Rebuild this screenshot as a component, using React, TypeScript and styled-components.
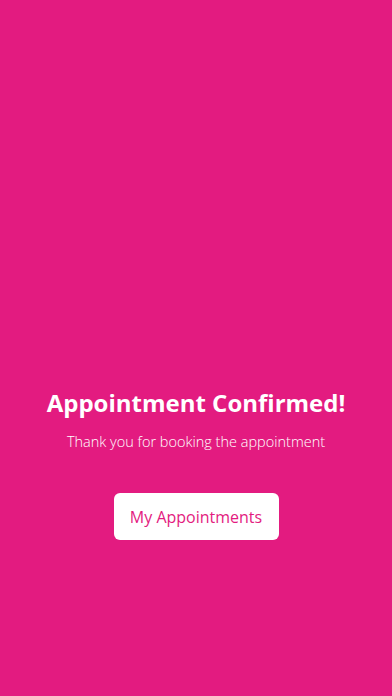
import React from 'react';
import styled, { createGlobalStyle } from 'styled-components';

const GlobalStyle = createGlobalStyle`
  html, body {
    margin: 0;
    padding: 0;
    background: #e31b80;
  }
  * {
    box-sizing: border-box;
  }
`;

const Screen = styled.div`
  width: 392px;
  height: 696px;
  background: #e31b80;
  display: flex;
  flex-direction: column;
  align-items: center;
  padding-top: 386px;
  font-family: 'Open Sans', 'Liberation Sans', sans-serif;
`;

const Title = styled.h1`
  margin: 0;
  color: #ffffff;
  font-size: 24px;
  font-weight: 700;
  line-height: 34px;
`;

const Subtitle = styled.p`
  margin: 12px 0 0;
  color: #ffffff;
  font-size: 14.5px;
  font-weight: 300;
  line-height: 20px;
`;

const ActionButton = styled.button`
  margin-top: 41px;
  width: 165px;
  height: 47px;
  border: none;
  border-radius: 6px;
  background: #ffffff;
  color: #e31b80;
  font-family: 'Open Sans', 'Liberation Sans', sans-serif;
  font-size: 16px;
  font-weight: 500;
  cursor: pointer;
`;

const App = () => {
  return (
    <>
      <GlobalStyle />
      <Screen>
        <Title>Appointment Confirmed!</Title>
        <Subtitle>Thank you for booking the appointment</Subtitle>
        <ActionButton>My Appointments</ActionButton>
      </Screen>
    </>
  );
};

export default App;
